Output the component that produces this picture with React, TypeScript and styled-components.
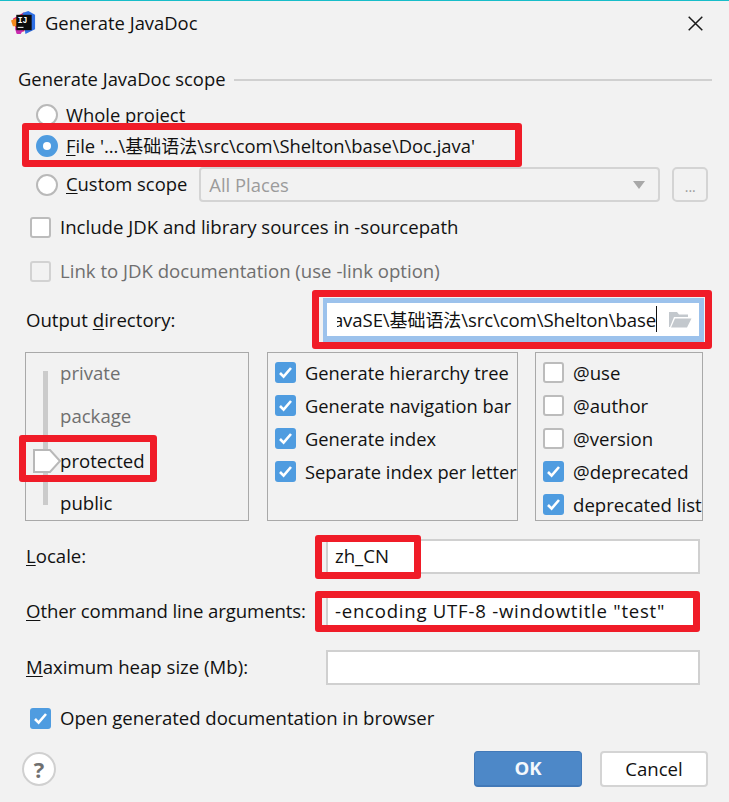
import React from "react";
import styled, { createGlobalStyle } from "styled-components";

const Global = createGlobalStyle`
  html, body { margin: 0; padding: 0; background: #f2f2f2; }
  * { box-sizing: border-box; }
`;

const FONT = `"Open Sans", "Noto Sans CJK SC", sans-serif`;

const Dialog = styled.div`
  position: relative;
  width: 729px;
  height: 802px;
  background: #f2f2f2;
  border-top: 1px solid #17bdc9;
  font-family: ${FONT};
  font-size: 18.6px;
  color: #111;
  overflow: hidden;
`;

const Lifted = styled.span<{ $tight?: boolean }>`
  padding-bottom: 2px;
  letter-spacing: ${(p) => (p.$tight ? "-0.05px" : "0")};
`;

const Cjk = styled.span`
  font-family: "Noto Sans CJK SC", sans-serif;
  font-size: 18px;
`;

const TitleBar = styled.div`
  height: 45px;
  display: flex;
  align-items: center;
  gap: 9px;
  padding: 0 26px 3px 11px;
`;

const TitleText = styled.div`
  flex: 1;
  font-size: 18.4px;
  color: #111;
`;

const SectionHeader = styled.div`
  height: 34px;
  margin-top: 16px;
  display: flex;
  align-items: center;
  gap: 9px;
  padding: 0 17px 0 18px;
  font-size: 18.4px;
`;

const SectionRule = styled.div`
  flex: 1;
  height: 2px;
  margin-top: 2px;
  background: #d0d0d0;
`;

const RadioRow = styled.div<{ $h: number; $mt?: number }>`
  height: ${(p) => p.$h}px;
  margin-top: ${(p) => p.$mt ?? 0}px;
  display: flex;
  align-items: center;
  padding-left: 36px;
  font-size: 18.4px;
`;

const RadioDot = styled.span<{ $on?: boolean }>`
  width: 22px;
  height: 22px;
  flex: none;
  border-radius: 50%;
  margin-right: 8px;
  background: ${(p) => (p.$on ? "#4f9ce0" : "#fff")};
  border: 2px solid ${(p) => (p.$on ? "#4f9ce0" : "#b9b9b9")};
  display: flex;
  align-items: center;
  justify-content: center;
  &::after {
    content: "";
    display: ${(p) => (p.$on ? "block" : "none")};
    width: 8px;
    height: 8px;
    border-radius: 50%;
    background: #fff;
  }
`;

const Mn = styled.span`
  text-decoration: underline;
  text-underline-offset: 2px;
`;

const Combo = styled.div`
  width: 461px;
  height: 35px;
  margin-left: 12px;
  border: 2px solid #d4d4d4;
  border-radius: 4px;
  display: flex;
  align-items: center;
  justify-content: space-between;
  padding: 0 13px 0 8px;
  color: #9b9b9b;
`;

const ComboArrow = styled.span`
  width: 0;
  height: 0;
  border-left: 6.5px solid transparent;
  border-right: 6.5px solid transparent;
  border-top: 8px solid #a8a8a8;
`;

const DotsButton = styled.div`
  width: 36px;
  height: 35px;
  margin-left: 12px;
  border: 2px solid #d4d4d4;
  border-radius: 5px;
  display: flex;
  align-items: center;
  justify-content: center;
  color: #9b9b9b;
  font-size: 14px;
  padding-top: 4px;
`;

const CheckRow = styled.div<{ $mt: number; $muted?: boolean }>`
  height: 30px;
  margin-top: ${(p) => p.$mt}px;
  display: flex;
  align-items: center;
  padding-left: 30px;
  gap: 9px;
  color: ${(p) => (p.$muted ? "#6f6f6f" : "#111")};
`;

const Box = styled.span<{ $on?: boolean; $muted?: boolean }>`
  width: 21px;
  height: 21px;
  flex: none;
  border-radius: 3px;
  display: flex;
  align-items: center;
  justify-content: center;
  background: ${(p) => (p.$on ? "#4f9ce0" : p.$muted ? "#f2f2f2" : "#fff")};
  border: ${(p) => (p.$on ? "none" : `2px solid ${p.$muted ? "#d2d2d2" : "#bcbcbc"}`)};
`;

const Tick = () => (
  <svg width="15" height="13" viewBox="0 0 15 13" fill="none">
    <path d="M2 7 L5.6 10.6 L13 2" stroke="#fff" strokeWidth="2.6" />
  </svg>
);

const FieldRow = styled.div<{ $mt: number; $h: number }>`
  height: ${(p) => p.$h}px;
  margin-top: ${(p) => p.$mt}px;
  display: flex;
  align-items: center;
  padding-left: 26px;
`;

const FieldLabel = styled.div<{ $tight?: boolean }>`
  width: 300px;
  flex: none;
  padding-bottom: 2px;
  white-space: nowrap;
  letter-spacing: ${(p) => (p.$tight ? "-0.1px" : "0")};
`;

const Field = styled.div<{ $spread?: boolean }>`
  width: 374px;
  height: 35px;
  background: #fff;
  border: 2px solid #d0d0d0;
  display: flex;
  align-items: center;
  padding: 0 0 2px 7px;
  white-space: pre;
  letter-spacing: ${(p) => (p.$spread ? "0.75px" : "0")};
`;

const FocusField = styled.div`
  width: 381px;
  height: 44px;
  margin-left: -3px;
  display: flex;
  align-items: center;
  background: #fff;
  border-style: solid;
  border-color: #9cc2ec;
  border-width: 5px 5px 6px 4px;
  padding: 0 7px 2px 7px;
`;

const PathClip = styled.div`
  flex: 1;
  min-width: 0;
  margin-left: 3px;
  overflow: hidden;
  display: flex;
  justify-content: flex-end;
  white-space: pre;
`;

const PathText = styled.span`
  border-right: 1px solid #111;
  flex: none;
  letter-spacing: -0.1px;
`;

const Panels = styled.div`
  height: 169px;
  margin-top: 10px;
  padding-left: 25px;
  display: flex;
`;

const Panel = styled.div<{ $w: number; $ml: number; $fs: number }>`
  width: ${(p) => p.$w}px;
  margin-left: ${(p) => p.$ml}px;
  padding: 3px 0 0 7px;
  border: 1.5px solid #a9a9a9;
  overflow: hidden;
  white-space: nowrap;
  font-size: ${(p) => p.$fs}px;
`;

const SliderPanel = styled.div`
  width: 224px;
  position: relative;
  border: 1.5px solid #a9a9a9;
  display: flex;
  align-items: stretch;
  padding: 18px 0 15px 17px;
`;

const Track = styled.div`
  width: 5px;
  background: #cbcbcb;
  flex: none;
`;

const Levels = styled.div`
  margin: -11px 0 0 12px;
  display: flex;
  flex-direction: column;
`;

const Level = styled.div<{ $muted?: boolean; $h: number }>`
  height: ${(p) => p.$h}px;
  flex: none;
  color: ${(p) => (p.$muted ? "#6f6f6f" : "#111")};
`;

const Thumb = styled.svg`
  position: absolute;
  left: 6px;
  top: 95px;
`;

const OptionRow = styled.div`
  height: 33px;
  display: flex;
  align-items: center;
  gap: 9px;
`;

const Annotation = styled.div<{ $x: number; $y: number; $w: number; $h: number }>`
  position: absolute;
  left: ${(p) => p.$x}px;
  top: ${(p) => p.$y}px;
  width: ${(p) => p.$w}px;
  height: ${(p) => p.$h}px;
  border: 7px solid #f01c28;
  border-radius: 3px;
`;

const Footer = styled.div`
  margin-top: 18px;
  height: 36px;
  display: flex;
  align-items: center;
  padding: 0 21px 0 22px;
`;

const Help = styled.div`
  width: 34px;
  height: 34px;
  border-radius: 50%;
  border: 2px solid #d0d0d0;
  background: #fff;
  color: #707070;
  font-weight: 700;
  font-size: 22px;
  display: flex;
  align-items: center;
  justify-content: center;
  margin-right: auto;
`;

const Btn = styled.div<{ $primary?: boolean }>`
  width: 108px;
  height: 36px;
  margin-left: 18px;
  border-radius: 4px;
  display: flex;
  align-items: center;
  justify-content: center;
  padding-bottom: 2px;
  background: ${(p) => (p.$primary ? "#4d88c8" : "#fff")};
  border: ${(p) => (p.$primary ? "1px solid #4279b8" : "2px solid #d4d4d4")};
  border-bottom-width: 2px;
  color: ${(p) => (p.$primary ? "#f4f8fc" : "#111")};
  font-weight: ${(p) => (p.$primary ? 700 : 400)};
`;

const CloseSvg = styled.svg`
  margin-top: 2px;
`;

const IdeaIcon = () => (
  <svg width="25" height="25" viewBox="0 0 26 26">
    <path d="M2 9 L14 2 L14 22 L6 24 Z" fill="#e2246f" />
    <path d="M0 11 L7 8 L7 17 L2 17 Z" fill="#f58a1f" />
    <path d="M12 3 L18 1 L25 5 L25 20 L15 25 Z" fill="#2f6fe4" />
    <path d="M4 19 L14 19 L10 25 L6 25 Z" fill="#c92bb0" />
    <rect x="5.5" y="5" width="16" height="16" fill="#0b0b0b" />
    <text x="7" y="13.5" fontFamily="Liberation Mono, monospace" fontSize="8.5" fontWeight="700" fill="#fff">
      IJ
    </text>
    <rect x="7" y="17.5" width="6" height="1.2" fill="#ddd" />
  </svg>
);

const CloseIcon = () => (
  <CloseSvg width="15" height="15" viewBox="0 0 15 15" fill="none">
    <path d="M0.7 0.7 L14.3 14.3 M14.3 0.7 L0.7 14.3" stroke="#1a1a1a" strokeWidth="1.5" />
  </CloseSvg>
);

const FolderSvg = styled.svg`
  flex: none;
  margin: 2px 0 0 11px;
`;

const FolderIcon = () => (
  <FolderSvg width="24" height="17" viewBox="0 0 24 17">
    <path d="M1 16 L1 1 L9 1 L11 3.5 L20 3.5 L20 6 L6 6 L2 16 Z" fill="#c3c8cd" />
    <path d="M7 7.5 L23.5 7.5 L19 16.5 L3 16.5 Z" fill="#c3c8cd" />
  </FolderSvg>
);

const Option = ({ on, children }: { on?: boolean; children: React.ReactNode }) => (
  <OptionRow>
    <Box $on={on}>{on && <Tick />}</Box>
    <span>{children}</span>
  </OptionRow>
);

export default function App() {
  return (
    <Dialog>
      <Global />
      <TitleBar>
        <IdeaIcon />
        <TitleText>Generate JavaDoc</TitleText>
        <CloseIcon />
      </TitleBar>

      <SectionHeader>
        <Lifted>Generate JavaDoc scope</Lifted>
        <SectionRule />
      </SectionHeader>

      <RadioRow $h={30} $mt={4}>
        <RadioDot />
        <Lifted>Whole project</Lifted>
      </RadioRow>
      <RadioRow $h={30} $mt={1}>
        <RadioDot $on />
        <Lifted>
          <Mn>F</Mn>ile '...\<Cjk>基础语法</Cjk>\src\com\Shelton\base\Doc.java'
        </Lifted>
      </RadioRow>
      <RadioRow $h={35} $mt={6}>
        <RadioDot />
        <Lifted>
          <Mn>C</Mn>ustom scope
        </Lifted>
        <Combo>
          <span>All Places</span>
          <ComboArrow />
        </Combo>
        <DotsButton>...</DotsButton>
      </RadioRow>

      <CheckRow $mt={10}>
        <Box />
        <Lifted>Include JDK and library sources in -sourcepath</Lifted>
      </CheckRow>
      <CheckRow $mt={14} $muted>
        <Box $muted />
        <Lifted>Link to JDK documentation (use -link option)</Lifted>
      </CheckRow>

      <FieldRow $mt={12} $h={44}>
        <FieldLabel>
          Output <Mn>d</Mn>irectory:
        </FieldLabel>
        <FocusField>
          <PathClip>
            <PathText>
              JavaSE\<Cjk>基础语法</Cjk>\src\com\Shelton\base
            </PathText>
          </PathClip>
          <FolderIcon />
        </FocusField>
      </FieldRow>

      <Panels>
        <SliderPanel>
          <Track />
          <Levels>
            <Level $muted $h={43}>private</Level>
            <Level $muted $h={45}>package</Level>
            <Level $h={42}>protected</Level>
            <Level $h={26}>public</Level>
          </Levels>
          <Thumb width="30" height="26" viewBox="0 0 30 26">
            <path d="M2 2 L18 2 L28 13 L18 24 L2 24 Z" fill="#fff" stroke="#b8b8b8" strokeWidth="2" />
          </Thumb>
        </SliderPanel>
        <Panel $w={251} $ml={18} $fs={18.3}>
          <Option on>Generate hierarchy tree</Option>
          <Option on>Generate navigation bar</Option>
          <Option on>Generate index</Option>
          <Option on>Separate index per letter</Option>
        </Panel>
        <Panel $w={168} $ml={17} $fs={18.6}>
          <Option>@use</Option>
          <Option>@author</Option>
          <Option>@version</Option>
          <Option on>@deprecated</Option>
          <Option on>deprecated list</Option>
        </Panel>
      </Panels>

      <FieldRow $mt={18} $h={35}>
        <FieldLabel>
          <Mn>L</Mn>ocale:
        </FieldLabel>
        <Field>zh_CN</Field>
      </FieldRow>
      <FieldRow $mt={20} $h={35}>
        <FieldLabel $tight>
          <Mn>O</Mn>ther command line arguments:
        </FieldLabel>
        <Field $spread>-encoding UTF-8 -windowtitle "test"</Field>
      </FieldRow>
      <FieldRow $mt={21} $h={35}>
        <FieldLabel>
          <Mn>M</Mn>aximum heap size (Mb):
        </FieldLabel>
        <Field />
      </FieldRow>

      <CheckRow $mt={18}>
        <Box $on>
          <Tick />
        </Box>
        <Lifted $tight>
          Open <Mn>g</Mn>enerated documentation in browser
        </Lifted>
      </CheckRow>

      <Footer>
        <Help>?</Help>
        <Btn $primary>OK</Btn>
        <Btn>Cancel</Btn>
      </Footer>

      <Annotation $x={22} $y={122} $w={500} $h={44} />
      <Annotation $x={312} $y={289} $w={400} $h={59} />
      <Annotation $x={19} $y={434} $w={138} $h={47} />
      <Annotation $x={315} $y={534} $w={106} $h={44} />
      <Annotation $x={315} $y={590} $w={385} $h={41} />
    </Dialog>
  );
}
